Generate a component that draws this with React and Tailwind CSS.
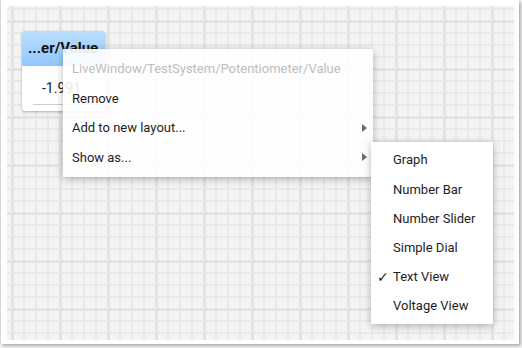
const mainItems = [
  { label: 'LiveWindow/TestSystem/Potentiometer/Value', disabled: true },
  { label: 'Remove' },
  { label: 'Add to new layout...', sub: true },
  { label: 'Show as...', sub: true },
]

const views = ['Graph', 'Number Bar', 'Number Slider', 'Simple Dial', 'Text View', 'Voltage View']

function Arrow() {
  return (
    <svg width="5" height="8" viewBox="0 0 5 8" className="ml-auto mr-[6px]">
      <path d="M0 0 L5 4 L0 8 Z" fill="#6b6b6b" />
    </svg>
  )
}

export default function App() {
  return (
    <div className="w-[522px] h-[348px] bg-[#f6f6f6] font-['Roboto',sans-serif] overflow-hidden">
      <div className="w-[519px] h-[344px] bg-white border-l border-[#d8d8d8] shadow-[2px_2px_3px_rgba(0,0,0,0.3)] pl-[6px] pt-[6px]">
        <div className="relative w-[507px] h-[334px] bg-[#f4f4f4] bg-[linear-gradient(to_right,#e4e4e4_3px,transparent_3px),linear-gradient(to_bottom,#e4e4e4_3px,transparent_3px),linear-gradient(to_right,#e9e9e9_2px,transparent_2px),linear-gradient(to_bottom,#e9e9e9_2px,transparent_2px)] bg-[length:48px_48px,48px_48px,12px_12px,12px_12px] bg-[position:4px_14px,4px_14px,4px_14px,4px_14px]">
          {/* widget tile */}
          <div className="absolute left-[15px] top-[25px] w-[83px] h-[80px] rounded-[3px] bg-white shadow-[0_1px_3px_rgba(0,0,0,0.3)] overflow-hidden">
            <div className="h-[35px] bg-[linear-gradient(to_bottom,#badefd,#91c7fa)] flex items-center pl-[6px] text-[15px] font-bold text-[#111] whitespace-nowrap">
              ...er/Value
            </div>
            <div className="h-[45px] relative">
              <div className="pl-[20px] pt-[12px] text-[14px] text-[#222]">-1.991</div>
              <div className="absolute left-[11px] right-0 top-[38px] h-px bg-[#cfcfcf]" />
            </div>
          </div>

          {/* context menu */}
          <div className="absolute left-[56px] top-[43px] w-[310px] py-[5px] bg-white/90 shadow-[0_2px_8px_rgba(0,0,0,0.28)]">
            {mainItems.map((item) => (
              <div
                key={item.label}
                className={`h-[29.5px] flex items-center pl-[9px] text-[13px] ${item.disabled ? 'text-[#bdbdbd]' : 'text-[#1e1e1e]'}`}
              >
                {item.label}
                {item.sub && <Arrow />}
              </div>
            ))}
          </div>

          {/* submenu */}
          <div className="absolute left-[364px] top-[136px] w-[122px] py-[3.5px] bg-white shadow-[0_2px_8px_rgba(0,0,0,0.28)]">
            {views.map((v) => (
              <div key={v} className="h-[29.2px] flex items-center text-[13px] text-[#1e1e1e]">
                <span className="w-[22px] pl-[6px] text-[14px] font-['DejaVu_Sans',sans-serif] leading-none">
                  {v === 'Text View' ? '✓' : ''}
                </span>
                {v}
              </div>
            ))}
          </div>
        </div>
      </div>
    </div>
  )
}
